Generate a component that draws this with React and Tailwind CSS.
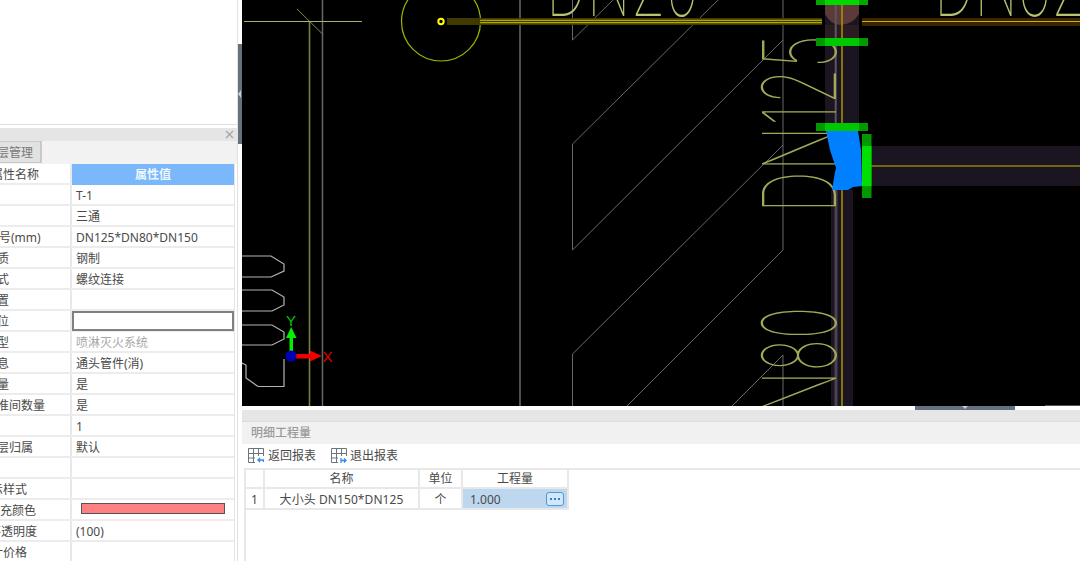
const font = { fontFamily: '"Noto Sans", "Noto Sans CJK SC", sans-serif' };

const rows = [
  { label: '属性名称', off: 'ml-[-9px]', head: true },
  { label: '', value: 'T-1' },
  { label: '', value: '三通' },
  { label: '规格型号(mm)', off: 'ml-[-37px]', value: 'DN125*DN80*DN150' },
  { label: '材质', off: 'ml-[-15px]', value: '钢制' },
  { label: '连接方式', off: 'ml-[-39px]', value: '螺纹连接' },
  { label: '所在位置', off: 'ml-[-39px]', value: '' },
  { label: '安装部位', off: 'ml-[-39px]', value: '', selected: true },
  { label: '系统类型', off: 'ml-[-39px]', value: '喷淋灭火系统', muted: true },
  { label: '汇总信息', off: 'ml-[-39px]', value: '通头管件(消)' },
  { label: '是否计算量', off: 'ml-[-51px]', value: '是' },
  { label: '是否标准间数量', off: 'ml-[-39px]', value: '是' },
  { label: '', value: '1' },
  { label: '楼层归属', off: 'ml-[-15px]', value: '默认' },
  { label: '', value: '' },
  { label: '显示样式', off: 'ml-[-21px]', value: '' },
  { label: '填充颜色', off: 'ml-[-12px]', swatch: true },
  { label: '不透明度', off: 'ml-[-11px]', value: '(100)' },
  { label: '设计价格', off: 'ml-[-21px]', value: '' },
];

function PropertyRow({ row }) {
  return (
    <div className="grid h-[21px] shrink-0 grid-cols-[72px_162px] border-b-2 border-[#ececec] text-[12px] leading-[21px] text-[#4a4a4a]">
      <div className="overflow-hidden whitespace-nowrap border-r-2 border-[#e8e8e8]">
        <span className={`block ${row.off || ''}`}>{row.label}</span>
      </div>
      {row.head ? (
        <div className="-mb-[2px] bg-[#7ab8fb] text-center font-bold leading-[21px] text-[#eef6ff]">属性值</div>
      ) : row.selected ? (
        <div className="-mb-[1px] border-2 border-[#808080] bg-white" />
      ) : row.swatch ? (
        <div className="pl-[9px] pr-[9px] pt-[3px]">
          <div className="h-[11px] w-full border border-[#555555] bg-[#ff8080]" />
        </div>
      ) : (
        <div className={`overflow-hidden whitespace-nowrap pl-[4px] ${row.muted ? 'text-[#a8a8a8]' : ''}`}>{row.value}</div>
      )}
    </div>
  );
}

function LeftPanel() {
  return (
    <div className="flex h-full w-[237px] shrink-0 flex-col overflow-hidden bg-white">
      <div className="h-[125px] shrink-0 border-b border-[#dddddd]" />
      <div className="mt-[3px] flex h-[13px] shrink-0 items-center justify-end bg-[#e5e5e5] pr-[3px]">
        <svg width="9" height="9" viewBox="0 0 9 9" className="text-[#a8a8a8]">
          <path d="M1 1L8 8M8 1L1 8" stroke="currentColor" strokeWidth="1.4" />
        </svg>
      </div>
      <div className="h-[23px] shrink-0 bg-[#f2f2f2]">
        <div className="h-[22px] w-[42px] overflow-hidden whitespace-nowrap border-r-2 border-t border-b border-[#c9c9c9] bg-[#e2e2e2] text-[12px] leading-[21px] text-[#777777]">
          <span className="ml-[-3px] block">层管理</span>
        </div>
      </div>
      <div className="flex min-h-0 w-[235px] flex-1 flex-col overflow-hidden border-r border-[#e6e6e6]">
        {rows.map((row, i) => (
          <PropertyRow key={i} row={row} />
        ))}
      </div>
    </div>
  );
}

function Splitter() {
  return (
    <div className="h-full w-[5px] shrink-0 border-l border-[#e2e2e2] bg-white pt-[44px]">
      <div className="flex h-[100px] w-[4px] items-center bg-[#667180]">
        <div className="h-0 w-0 border-y-[4px] border-r-[3px] border-y-transparent border-r-[#c8ccd0]" />
      </div>
    </div>
  );
}

const GREY = '#686868';
const OLIVE = '#a3a957';
const TOP = '#b9c172';
const cadFont = { fontFamily: 'Inter, Roboto, sans-serif', fontWeight: 100 };

function Flange({ x, y, w, h, vertical, edge, core }) {
  return vertical ? (
    <g>
      <rect x={x} y={y} width={w} height={h} fill={edge} />
      <rect x={x} y={y + 12} width={w} height={h - 24} fill={core} />
    </g>
  ) : (
    <g>
      <rect x={x} y={y} width={w} height={h} fill={edge} />
      <rect x={x + 9} y={y} width={w - 18} height={h} fill={core} />
    </g>
  );
}

function Canvas() {
  return (
    <div className="h-[406px] shrink-0 overflow-hidden bg-black">
      <svg width="838" height="406" viewBox="242 0 838 406" className="block">
        {/* grey hatch and grid */}
        <g fill="none" stroke={GREY} strokeWidth="1">
          <path d="M322.5 0V406M520 0V406" strokeWidth="1.5" />
          <path d="M572.5 0V40L613 0M572.5 144V250L783 40M718 0L572.5 144M783 0V250L627 406M572.5 406V354L783 145M783 406V355L732 406" />
          <path d="M297 9L322.5 34" stroke="#7f8a55" />
        </g>
        <path d="M244 21.5H362" stroke="#a7b06a" strokeWidth="1.2" />
        <path d="M309.5 22V406" stroke="#78803f" strokeWidth="1.6" />

        {/* sprinkler and branch pipe */}
        <circle cx="441" cy="21.5" r="39.5" fill="none" stroke="#a3b300" strokeWidth="1.2" />
        <rect x="447" y="18" width="375" height="7" fill="#403a00" />
        <path d="M480 20.3H822M480 22.7H822" stroke="#c9c400" strokeWidth="1" />
        <circle cx="441" cy="21.5" r="2.7" fill="#000" stroke="#ffff00" strokeWidth="2" />
        <rect x="862" y="18" width="218" height="8" fill="#3a2500" />
        <path d="M862 21.5H1080" stroke="#c9b400" strokeWidth="1" />

        {/* main pipe bands */}
        <rect x="825" y="0" width="34" height="131" fill="#1b1522" />
        <path d="M825 0H859V14Q852 25 840 25Q831 25 825 14Z" fill="#5b3a38" />
        <rect x="825" y="25" width="34" height="13" fill="#2b1c22" />
        <rect x="831" y="190" width="22" height="216" fill="#1b1522" />
        <rect x="871" y="146" width="209" height="40" fill="#1b1522" />
        <path d="M835.7 0V130" stroke="#5c5664" strokeWidth="2" />
        <path d="M836 190V406" stroke="#4a4452" strokeWidth="3" />
        <path d="M842 0V131M842 190V406" stroke="#b39c00" strokeWidth="1.4" />
        <path d="M871 166H1080" stroke="#c9b400" strokeWidth="1" />

        {/* CAD labels */}
        <g fill={TOP} style={cadFont} fontSize="102">
          <text x="546" y="16" textLength="152" lengthAdjust="spacingAndGlyphs">DN25</text>
          <text x="934" y="16" textLength="152" lengthAdjust="spacingAndGlyphs">DN32</text>
        </g>
        <g fill={OLIVE} style={cadFont} fontSize="102">
          <text transform="translate(836 213) rotate(-90)" textLength="178" lengthAdjust="spacingAndGlyphs">DN125</text>
          <text transform="translate(836 452) rotate(-90)" textLength="145" lengthAdjust="spacingAndGlyphs">DN80</text>
        </g>

        {/* fitting */}
        <path d="M826 131H858L861 150L862 186L853 187L848 190L832 190L835 172L836 168L830 150Z" fill="#0080ff" />
        <Flange x={816} y={-3} w={52} h={8} edge="#00a800" core="#00d800" />
        <Flange x={816} y={38} w={52} h={8} edge="#009a00" core="#00c800" />
        <Flange x={816} y={123} w={52} h={8} edge="#009a00" core="#00c800" />
        <Flange x={862} y={134} w={9.5} h={64} vertical edge="#009a00" core="#00e000" />

        {/* fragments at the left edge */}
        <g fill="none" stroke="#b4b4b4" strokeWidth="1.2">
          <path d="M242 256H271L284 264V271L271 277H242" />
          <path d="M242 290H272L284 297V305L272 311H242" />
          <path d="M242 325H272L284 332V339L272 345H242" />
          <path d="M242 363L246 365V378L258 386.5H284V359" />
        </g>

        {/* axes */}
        <rect x="289.5" y="336" width="3.5" height="16" fill="#00f000" />
        <path d="M291.2 327L296.5 338H286Z" fill="#00f000" />
        <rect x="296" y="354" width="16" height="4.5" fill="#f00000" />
        <path d="M322 356L310 350.5V361.5Z" fill="#f00000" />
        <circle cx="291" cy="356" r="5.5" fill="#0000b4" />
        <text x="286" y="326" fontSize="15" fill="#00c800" style={{ fontFamily: '"Liberation Sans", sans-serif' }}>Y</text>
        <text x="322.5" y="362" fontSize="15" fill="#e00000" style={{ fontFamily: '"Liberation Sans", sans-serif' }}>X</text>
        <path d="M1045 405.5H1080" stroke="#555555" strokeWidth="1" />
      </svg>
    </div>
  );
}

function ReportIcon({ exit }) {
  return (
    <svg width="16" height="16" viewBox="0 0 16 16" className="shrink-0">
      <path d="M.5.5H15.5V8M.5.5V14.5H7M.5 5.5H15.5M5.5.5V14.5M10.5.5V8M.5 10H7" fill="none" stroke="#6c7480" strokeWidth="1" />
      {exit ? (
        <path d="M10 12.5H15M13 10.5L15 12.5L13 14.5M10 10V15" fill="none" stroke="#2f8be6" strokeWidth="1.3" />
      ) : (
        <path d="M15.5 14V12H10M12 10L10 12L12 14" fill="none" stroke="#2f8be6" strokeWidth="1.3" />
      )}
    </svg>
  );
}

function BottomPanel() {
  const cell = 'border-r-2 border-b-2 border-[#e8e8e8]';
  return (
    <div className="flex min-h-0 flex-1 flex-col bg-white text-[12px] text-[#4a4a4a]">
      <div className="h-[4px] shrink-0 pl-[673px]">
        <div className="flex h-full w-[100px] justify-center bg-[#667180]">
          <div className="h-0 w-0 border-x-[3px] border-t-[3px] border-x-transparent border-t-[#c8ccd0]" />
        </div>
      </div>
      <div className="h-[12px] shrink-0 border-b border-[#dcdcdc] bg-[#e6e6e6]" />
      <div className="flex h-[22px] shrink-0 items-center bg-[#f1f1f1] pl-[9px] font-medium text-[#9a9a9a]">明细工程量</div>
      <div className="flex h-[24px] shrink-0 items-center pl-[6px]">
        <ReportIcon />
        <span className="ml-[4px]">返回报表</span>
        <span className="ml-[15px]"><ReportIcon exit /></span>
        <span className="ml-[3px]">退出报表</span>
      </div>
      <div className="ml-[2px] flex-1 border-l-2 border-t-2 border-[#e8e8e8]">
        <div className="grid grid-cols-[19px_155px_43px_106px] grid-rows-[19px_21px] leading-[18px]">
          <div className={cell} />
          <div className={`${cell} text-center`}>名称</div>
          <div className={`${cell} text-center`}>单位</div>
          <div className={`${cell} text-center`}>工程量</div>
          <div className={`${cell} pl-[5px] leading-[22px]`}>1</div>
          <div className={`${cell} text-center leading-[22px] tracking-[0.08px]`}>大小头 DN150*DN125</div>
          <div className={`${cell} text-center leading-[22px]`}>个</div>
          <div className={`${cell} flex items-center justify-between bg-[#bdd7ee] pl-[7px] pr-[3px]`}>
            <span className="pt-[2px]">1.000</span>
            <div className="flex h-[14px] w-[18px] items-center justify-center gap-[2px] rounded-[3px] border border-[#4a98e0] bg-[#d5e6f6]">
              <i className="block h-[2px] w-[2px] bg-[#2f7fd0]" />
              <i className="block h-[2px] w-[2px] bg-[#2f7fd0]" />
              <i className="block h-[2px] w-[2px] bg-[#2f7fd0]" />
            </div>
          </div>
        </div>
      </div>
    </div>
  );
}

export default function App() {
  return (
    <div className="flex h-[561px] w-[1080px] overflow-hidden bg-white" style={font}>
      <LeftPanel />
      <Splitter />
      <div className="flex h-full min-w-0 flex-1 flex-col">
        <Canvas />
        <BottomPanel />
      </div>
    </div>
  );
}
